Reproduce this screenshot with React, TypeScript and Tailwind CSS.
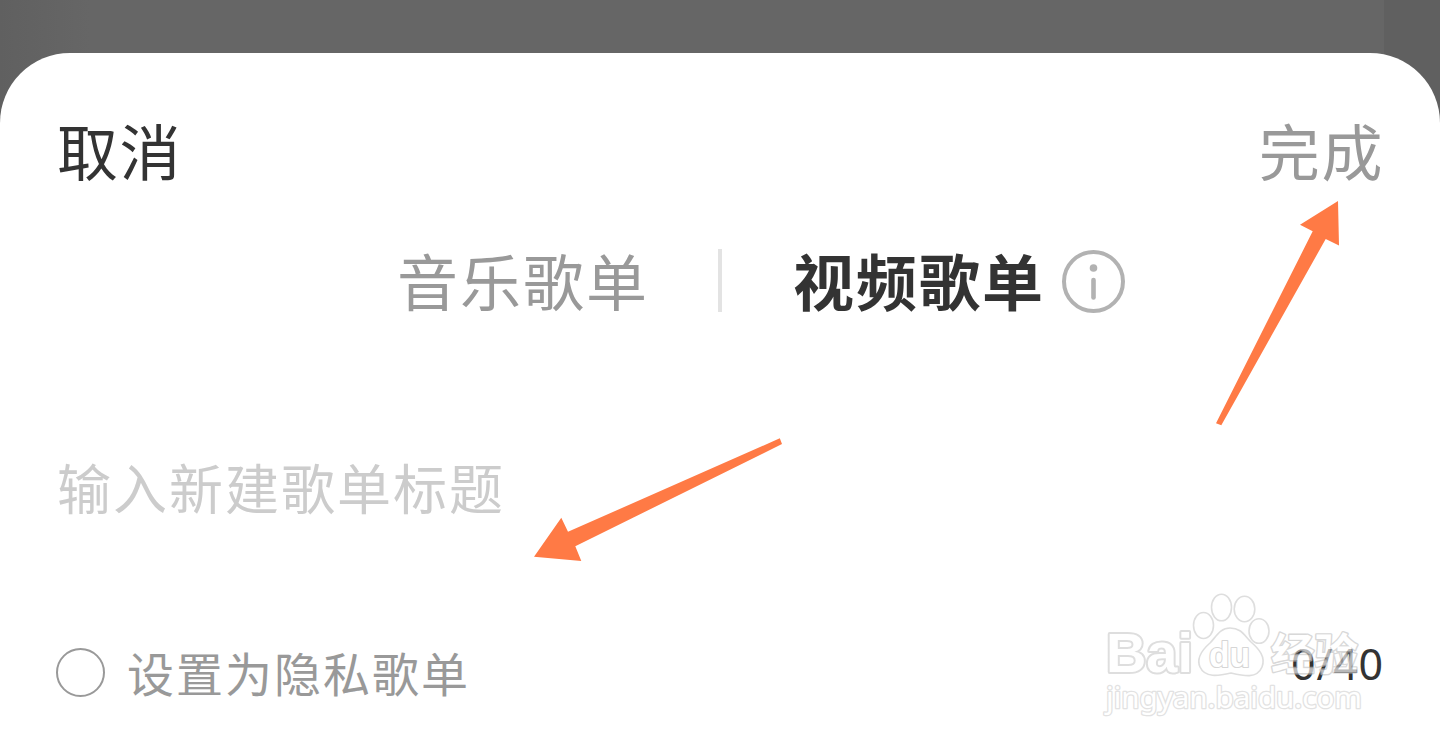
import React from "react";

function InfoIcon() {
  return (
    <svg className="block h-16 w-16" viewBox="0 0 64 64" fill="none">
      <circle cx="32.5" cy="32.5" r="29.5" stroke="#b2b2b2" strokeWidth="4" />
      <circle cx="32.5" cy="19" r="3.8" fill="#b2b2b2" />
      <path d="M32.5 31v17.5" stroke="#b2b2b2" strokeWidth="4.6" strokeLinecap="round" />
    </svg>
  );
}

function Annotations() {
  return (
    <svg className="pointer-events-none absolute left-0 top-0 h-[748px] w-[1440px]" viewBox="0 0 1440 748" fill="#ff7a45">
      <path d="M1338 201L1300 224.7L1312.7 231.3L1216 423.3L1221.3 425.2L1325.7 239L1339 245.5Z" />
      <path d="M534 556.7L561.3 517.7L568 531.8L779.8 438.3L782 444L575.3 546.3L581.3 561Z" />
    </svg>
  );
}

function Watermark() {
  return (
    <svg
      className="pointer-events-none absolute left-[1090px] top-[580px] h-[150px] w-[320px]"
      viewBox="0 0 320 150"
      fill="#ffffff"
      stroke="#dedede"
      strokeWidth="1.6"
      strokeLinejoin="round"
    >
      <text x="16" y="92" fontSize="56" fontFamily="'Liberation Sans', Arial, sans-serif" fontWeight="700" textLength="87" lengthAdjust="spacingAndGlyphs" strokeWidth="4" paintOrder="stroke">Bai</text>
      <ellipse cx="113.5" cy="45.5" rx="10" ry="13" />
      <ellipse cx="131.5" cy="27.5" rx="10" ry="13.3" />
      <ellipse cx="154.5" cy="29" rx="10.3" ry="12.8" />
      <ellipse cx="169" cy="51" rx="10" ry="12.3" />
      <path d="M140 48C130 48 126 57 120 63C112 70 106 78 110 87C115 98 128 96 141 93C154 96 167 99 172 87C176 77 169 69 161 62C154 55 151 48 140 48Z" />
      <text x="119" y="87" fontSize="35" fontFamily="'Liberation Sans', Arial, sans-serif" fontWeight="700" textLength="41" lengthAdjust="spacingAndGlyphs" stroke="#d6d6d6" strokeWidth="2.2" paintOrder="stroke">du</text>
      <text x="181" y="90" fontSize="43.5" fontFamily="'Noto Sans CJK SC', sans-serif" fontWeight="700" stroke="#c4c4c4" strokeWidth="2.8" paintOrder="stroke" opacity="0.65">经验</text>
      <text x="16" y="128" fontSize="29" fontFamily="'Noto Sans', sans-serif" stroke="#e2e2e2" strokeWidth="2.6" paintOrder="stroke" textLength="256" lengthAdjust="spacingAndGlyphs">jingyan.baidu.com</text>
    </svg>
  );
}

export default function App() {
  return (
    <div className="relative flex h-[748px] w-[1440px] flex-col overflow-hidden bg-[#666666] bg-[linear-gradient(90deg,#606060_0,#666666_90px,#666666_1384px,#606060_1384px)] pt-[53px] font-['Noto_Sans_CJK_SC',sans-serif]">
      <main className="flex flex-1 flex-col rounded-t-[70px] bg-white">
        <header className="flex h-[137px] items-end justify-between pl-[57px] pr-[56px] text-[61px] leading-[60px] tracking-[1.6px]">
          <button className="h-[80px] whitespace-nowrap text-[#333333]">取消</button>
          <button className="h-[80px] whitespace-nowrap text-[#999999]">完成</button>
        </header>
        <nav className="flex h-[180px] items-center pl-[397px] text-[61px] leading-[60px] tracking-[2px]">
          <button className="w-[251px] whitespace-nowrap text-left text-[#999999]">音乐歌单</button>
          <span className="ml-[70px] h-[63px] w-1 bg-[#e3e3e3]" />
          <button className="ml-[71px] w-[252px] whitespace-nowrap text-left font-bold text-[#333333]">视频歌单</button>
          <span className="ml-[16px] pt-px">
            <InfoIcon />
          </span>
        </nav>
        <input
          aria-label="歌单标题"
          className="mt-[76px] h-[80px] w-full bg-transparent pl-[57px] text-[54px] tracking-[2px] outline-none placeholder:text-[#cccccc]"
          placeholder="输入新建歌单标题"
        />
        <footer className="mt-[102px] flex h-[88px] items-center justify-between pl-[56px] pr-[56px]">
          <label className="flex items-center gap-[22px]">
            <span className="h-[49px] w-[49px] rounded-full border-2 border-[#999999]" />
            <span className="text-[47px] leading-[60px] tracking-[2px] text-[#999999]">设置为隐私歌单</span>
          </label>
          <span className="pb-[16px] font-['Noto_Sans',sans-serif] text-[43px] leading-[50px] tracking-[0.8px] text-[#333333]">0/40</span>
        </footer>
      </main>
      <Annotations />
      <Watermark />
    </div>
  );
}
